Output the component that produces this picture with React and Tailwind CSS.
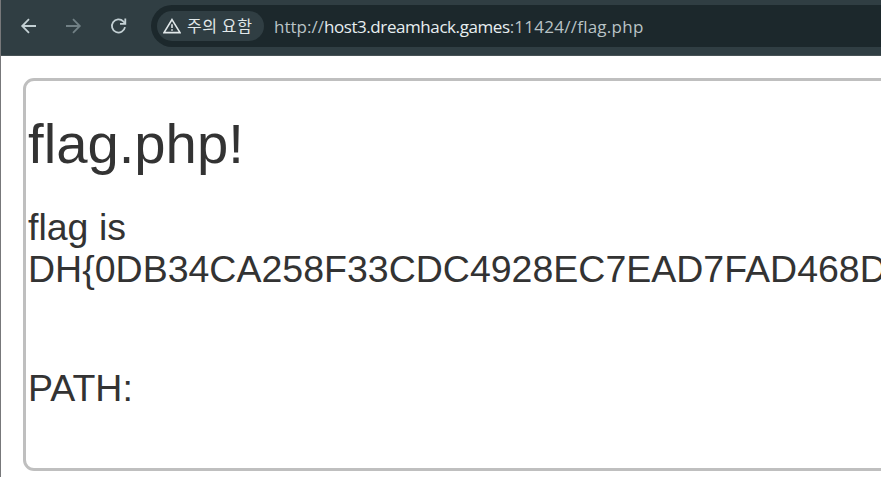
import React from "react";

const iconProps = {
  viewBox: "0 0 18 18",
  width: 18,
  height: 18,
  fill: "none",
  strokeWidth: 1.8,
  className: "block shrink-0",
};

function BackIcon() {
  return (
    <svg {...iconProps} stroke="#c3d0d4">
      <path d="M16 9H2.5M9 2.2L2.2 9L9 15.8" />
    </svg>
  );
}

function ForwardIcon() {
  return (
    <svg {...iconProps} stroke="#718085">
      <path d="M1 9h13.5M8 2.2L14.8 9L8 15.8" />
    </svg>
  );
}

function ReloadIcon() {
  return (
    <svg {...iconProps} stroke="#c3d0d4">
      <path d="M15 10.2A6.6 6.6 0 1 1 13.3 4.4L15.3 6.4" />
      <path d="M15.3 1.6V6.8H10" />
    </svg>
  );
}

function WarningIcon() {
  return (
    <svg viewBox="0 0 18 16" width="18" height="16" fill="none" stroke="#e1e8ea" strokeWidth="1.6" className="block shrink-0">
      <path d="M9 1.6L17 14.6H1Z" />
      <path d="M9 6.2v3.8M9 11.2v1.6" />
    </svg>
  );
}

function Toolbar() {
  return (
    <header className="flex h-14 w-full items-start border-b border-[#475255] bg-[#303e43] pl-[19px] pt-[5px]">
      <nav className="flex h-[42px] items-center gap-[27px]">
        <BackIcon />
        <ForwardIcon />
        <ReloadIcon />
      </nav>
      <div className="ml-[23px] flex h-[42px] min-w-0 grow items-center rounded-l-full bg-[#1c282c] pl-[6px]">
        <div className="flex h-[30px] w-[107px] shrink-0 items-center gap-[6px] rounded-full bg-[#303e43] pl-[6px]">
          <WarningIcon />
          <span className="whitespace-nowrap pb-[3px] font-['Noto_Sans_CJK_KR',sans-serif] text-[16px] leading-none tracking-[0.6px] text-[#e1e8ea]">주의 요함</span>
        </div>
        <div className="ml-[10px] whitespace-nowrap pt-px font-['Open_Sans','Noto_Sans',sans-serif] text-[17px] leading-6 text-[#b9c3c6]">
          <span>http://</span>
          <span className="tracking-[-0.42px] text-[#e7eef0]">host3.dreamhack.games</span>
          <span className="tracking-[0.25px]">:11424//flag.php</span>
        </div>
      </div>
    </header>
  );
}

export default function App() {
  return (
    <div className="h-[477px] w-[881px] overflow-hidden border-l border-[#77787a] bg-white">
      <Toolbar />
      <main className="ml-[22px] mt-[22px] h-[393px] w-[900px] rounded-[11px] border-[3px] border-[#bfbfbf] pl-[2px] font-['Liberation_Sans',Arial,sans-serif] text-[#333333]">
        <h1 className="mt-[32px] text-[56.25px] leading-[62px]">flag.php!</h1>
        <h3 className="mt-[32px] whitespace-nowrap text-[37.5px] leading-[41.5px]">
          flag is
          <br />
          DH{"{"}0DB34CA258F33CDC4928EC7EAD7FAD468D
        </h3>
        <h3 className="mt-[78px] text-[37.5px] leading-[41px]">PATH:</h3>
      </main>
    </div>
  );
}
